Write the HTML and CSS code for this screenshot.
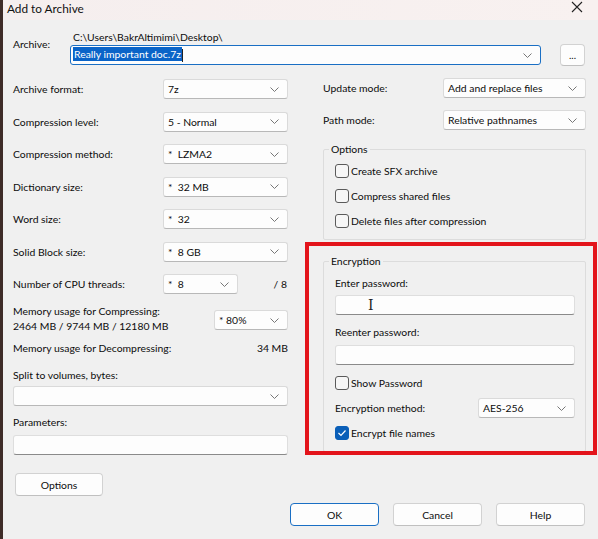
FILE: index.html
```html
<!DOCTYPE html>
<html>
<head>
<meta charset="utf-8">
<link rel="stylesheet" href="styles.css">
</head>
<body>
<div class="window">
  <div class="titlebar">
    <span class="title">Add to Archive</span>
    <svg class="close" width="12" height="12" viewBox="0 0 12 12"><path d="M1 1 L11 11 M11 1 L1 11" stroke="#222" stroke-width="1.1" fill="none"/></svg>
  </div>
  <div class="content">
    <div class="archive-row">
      <span class="archive-label">Archive:</span>
      <div class="path-col">
        <div class="path">C:\Users\BakrAltimimi\Desktop\</div>
        <div class="combo focused"><span class="val"><span class="sel">Really important doc.7z</span><span class="caret"></span></span><svg class="chev" width="9" height="5" viewBox="0 0 9 5"><path d="M0.5 0.5 L4.5 4.5 L8.5 0.5" fill="none" stroke="#777" stroke-width="1"/></svg></div>
      </div>
      <div class="btn dots">...</div>
    </div>

    <div class="columns">
      <div class="left">
        <div class="lrows">
          <div class="lrow"><span>Archive format:</span><div class="combo w125"><span class="val">7z</span><svg class="chev" width="9" height="5" viewBox="0 0 9 5"><path d="M0.5 0.5 L4.5 4.5 L8.5 0.5" fill="none" stroke="#777" stroke-width="1"/></svg></div></div>
          <div class="lrow"><span>Compression level:</span><div class="combo w125"><span class="val">5 - Normal</span><svg class="chev" width="9" height="5" viewBox="0 0 9 5"><path d="M0.5 0.5 L4.5 4.5 L8.5 0.5" fill="none" stroke="#777" stroke-width="1"/></svg></div></div>
          <div class="lrow"><span>Compression method:</span><div class="combo w125"><span class="val">*&nbsp;&nbsp;LZMA2</span><svg class="chev" width="9" height="5" viewBox="0 0 9 5"><path d="M0.5 0.5 L4.5 4.5 L8.5 0.5" fill="none" stroke="#777" stroke-width="1"/></svg></div></div>
          <div class="lrow"><span>Dictionary size:</span><div class="combo w125"><span class="val">*&nbsp;&nbsp;32 MB</span><svg class="chev" width="9" height="5" viewBox="0 0 9 5"><path d="M0.5 0.5 L4.5 4.5 L8.5 0.5" fill="none" stroke="#777" stroke-width="1"/></svg></div></div>
          <div class="lrow"><span>Word size:</span><div class="combo w125"><span class="val">*&nbsp;&nbsp;32</span><svg class="chev" width="9" height="5" viewBox="0 0 9 5"><path d="M0.5 0.5 L4.5 4.5 L8.5 0.5" fill="none" stroke="#777" stroke-width="1"/></svg></div></div>
          <div class="lrow"><span>Solid Block size:</span><div class="combo w125"><span class="val">*&nbsp;&nbsp;8 GB</span><svg class="chev" width="9" height="5" viewBox="0 0 9 5"><path d="M0.5 0.5 L4.5 4.5 L8.5 0.5" fill="none" stroke="#777" stroke-width="1"/></svg></div></div>
          <div class="lrow cpu"><span>Number of CPU threads:</span><div class="combo w75"><span class="val">*&nbsp;&nbsp;8</span><svg class="chev" width="9" height="5" viewBox="0 0 9 5"><path d="M0.5 0.5 L4.5 4.5 L8.5 0.5" fill="none" stroke="#777" stroke-width="1"/></svg></div><span class="of">/ 8</span></div>
        </div>
        <div class="mem">
          <div class="mem-text">Memory usage for Compressing:<br>2464 MB / 9744 MB / 12180 MB</div>
          <div class="combo w74"><span class="val">* 80%</span><svg class="chev" width="9" height="5" viewBox="0 0 9 5"><path d="M0.5 0.5 L4.5 4.5 L8.5 0.5" fill="none" stroke="#777" stroke-width="1"/></svg></div>
        </div>
        <div class="decomp"><span>Memory usage for Decompressing:</span><span>34 MB</span></div>
        <div class="split-label">Split to volumes, bytes:</div>
        <div class="combo full split"><span class="val"></span><svg class="chev" width="9" height="5" viewBox="0 0 9 5"><path d="M0.5 0.5 L4.5 4.5 L8.5 0.5" fill="none" stroke="#777" stroke-width="1"/></svg></div>
        <div class="param-label">Parameters:</div>
        <div class="textbox params"></div>
        <div class="btn options">Options</div>
      </div>

      <div class="right">
        <div class="rrow first"><span>Update mode:</span><div class="combo w143"><span class="val">Add and replace files</span><svg class="chev" width="9" height="5" viewBox="0 0 9 5"><path d="M0.5 0.5 L4.5 4.5 L8.5 0.5" fill="none" stroke="#777" stroke-width="1"/></svg></div></div>
        <div class="rrow"><span>Path mode:</span><div class="combo w143"><span class="val">Relative pathnames</span><svg class="chev" width="9" height="5" viewBox="0 0 9 5"><path d="M0.5 0.5 L4.5 4.5 L8.5 0.5" fill="none" stroke="#777" stroke-width="1"/></svg></div></div>

        <fieldset class="group opts">
          <legend>Options</legend>
          <div class="check"><span class="box"></span><span>Create SFX archive</span></div>
          <div class="check"><span class="box"></span><span>Compress shared files</span></div>
          <div class="check"><span class="box"></span><span>Delete files after compression</span></div>
        </fieldset>

        <fieldset class="group enc">
          <legend>Encryption</legend>
          <div class="enc-label first">Enter password:</div>
          <div class="textbox pw"><span class="ibeam">I</span></div>
          <div class="enc-label">Reenter password:</div>
          <div class="textbox pw"></div>
          <div class="check show"><span class="box"></span><span>Show Password</span></div>
          <div class="method"><span>Encryption method:</span><div class="combo w97"><span class="val">AES-256</span><svg class="chev" width="9" height="5" viewBox="0 0 9 5"><path d="M0.5 0.5 L4.5 4.5 L8.5 0.5" fill="none" stroke="#777" stroke-width="1"/></svg></div></div>
          <div class="check names"><span class="box checked"><svg width="10" height="8" viewBox="0 0 10 8"><path d="M1.5 4 L4 6.5 L8.5 1.5" fill="none" stroke="#fff" stroke-width="1.2"/></svg></span><span>Encrypt file names</span></div>
        </fieldset>
      </div>
    </div>

    <div class="buttons">
      <div class="btn dlg ok">OK</div>
      <div class="btn dlg">Cancel</div>
      <div class="btn dlg">Help</div>
    </div>
  </div>
  <div class="highlight"></div>
</div>
</body>
</html>
```

FILE: styles.css
```css
* { box-sizing: border-box; }
html, body { margin: 0; padding: 0; }
body {
  width: 598px;
  height: 539px;
  overflow: hidden;
  background: #f0f0f0;
  font-family: Lato, "Liberation Sans", sans-serif;
  font-size: 10.4px;
  color: #0c0c0c;
}
.window {
  position: relative;
  width: 598px;
  height: 539px;
  border-left: 3px solid #3e2c28;
  background: #f0f0f0;
}
.titlebar {
  height: 20px;
  background: linear-gradient(to right, #f5eeee, #f8f1f0);
  display: flex;
  align-items: center;
  justify-content: space-between;
  padding: 0 15px 0 4px;
}
.title { font-size: 11.8px; color: #111; margin-top: -4px; }
.close { margin-top: -6px; }
.content { padding: 10px 12px 0 10px; }

.archive-row {
  display: grid;
  grid-template-columns: 57px 471px 44px;
  align-items: start;
}
.archive-label { line-height: 14px; margin-top: 7px; }
.path { line-height: 14px; padding-left: 3px; }
.combo {
  display: flex;
  align-items: center;
  justify-content: space-between;
  height: 20px;
  background: #fdfdfd;
  border: 1px solid #dadada;
  border-bottom-color: #b8b8b8;
  border-radius: 3px;
  padding: 0 8px 0 4px;
  white-space: nowrap;
}
.combo.focused {
  margin-top: 1px;
  border: 1px solid #1a6fc4;
  padding-left: 2px;
}
.sel { background: #0a64c8; color: #fff; padding: 1px 1px; }
.caret { display: inline-block; width: 1px; height: 13px; background: #222; vertical-align: middle; }
.btn {
  display: flex;
  align-items: center;
  justify-content: center;
  background: #fdfdfd;
  border: 1px solid #d2d2d2;
  border-bottom-color: #c0c0c0;
  border-radius: 4px;
}
.dots { margin-top: 14px; margin-left: 19px; width: 25px; height: 22px; font-size: 10px; }

.columns {
  display: flex;
  gap: 35px;
  margin-top: 12px;
}
.left { width: 275px; display: flex; flex-direction: column; padding-top: 1px; }
.right { width: 263px; display: flex; flex-direction: column; }

.lrows { display: flex; flex-direction: column; gap: 12.5px; }
.lrow { display: flex; align-items: center; justify-content: space-between; height: 20px; }
.w125 { width: 125px; }
.w75 { width: 75px; }
.w74 { width: 74px; }
.w143 { width: 143px; }
.w97 { width: 97px; }
.lrow.cpu { display: grid; grid-template-columns: 150px 75px 1fr; }
.of { text-align: right; padding-right: 1px; }

.mem { display: flex; justify-content: space-between; margin-top: 10px; }
.mem-text { line-height: 15px; }
.mem .combo { margin-top: 6px; }
.decomp { display: flex; justify-content: space-between; line-height: 14px; margin-top: 7px; }
.split-label { line-height: 14px; margin-top: 13px; }
.combo.full { width: 275px; }
.split { margin-top: 4px; }
.param-label { line-height: 14px; margin-top: 9px; }
.textbox {
  height: 20px;
  background: #fdfdfd;
  border: 1px solid #dedede;
  border-bottom: 1px solid #8a8a8a;
  border-radius: 3px;
}
.params { margin-top: 6px; width: 275px; }
.options { margin-top: 18px; margin-left: 2px; width: 88px; height: 23px; }

.rrow { display: flex; align-items: center; justify-content: space-between; height: 20px; }
.rrow + .rrow { margin-top: 12px; }

.group {
  margin: 0;
  border: 1px solid #dcdcdc;
  border-radius: 2px;
  min-width: 0;
}
.group legend { padding: 0 2px; margin-left: -6px; line-height: 14px; }
.opts { margin-top: 12px; padding: 7px 10px 10px 11px; }
.check { display: flex; align-items: center; height: 16px; gap: 2px; }
.check + .check { margin-top: 9px; }
.box {
  width: 14px;
  height: 14px;
  border: 1px solid #5a5a5a;
  border-radius: 3px;
  background: #f6f6f6;
  display: flex;
  align-items: center;
  justify-content: center;
}
.box.checked { background: #0a5fb8; border-color: #0a5fb8; }

.enc { margin-top: 14px; padding: 8px 10px 10px 11px; }
.enc-label { line-height: 14px; margin-top: 10px; }
.enc-label.first { margin-top: 0; }
.pw { margin-top: 5px; position: relative; }
.pw + .enc-label + .pw { margin-top: 6px; }
.ibeam { position: absolute; left: 32px; top: 1px; font-family: "DejaVu Serif", serif; font-size: 14px; line-height: 16px; color: #222; }
.check.show { margin-top: 10px; }
.method { display: flex; align-items: center; justify-content: space-between; margin-top: 7px; height: 20px; }
.check.names { margin-top: 7px; }

.buttons { display: flex; justify-content: flex-end; gap: 14px; margin-top: 7px; padding-right: 1px; }
.dlg { width: 89px; height: 23px; }
.ok { border: 1.5px solid #1a6fc4; }

.highlight {
  position: absolute;
  left: 302px;
  top: 242px;
  width: 292px;
  height: 213px;
  border: 4px solid #e3141b;
  pointer-events: none;
}
```
